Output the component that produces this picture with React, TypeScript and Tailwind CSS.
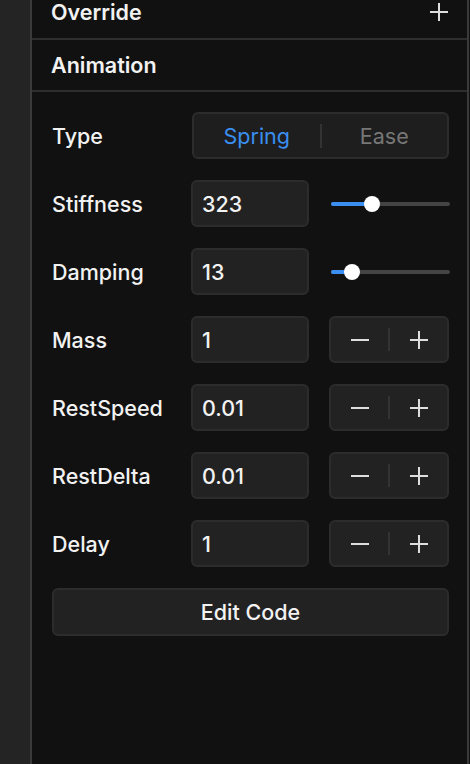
import React from 'react';

type Row =
  | { label: string; value: string; kind: 'slider'; fill: number }
  | { label: string; value: string; kind: 'stepper' };

const rows: Row[] = [
  { label: 'Stiffness', value: '323', kind: 'slider', fill: 0.345 },
  { label: 'Damping', value: '13', kind: 'slider', fill: 0.176 },
  { label: 'Mass', value: '1', kind: 'stepper' },
  { label: 'RestSpeed', value: '0.01', kind: 'stepper' },
  { label: 'RestDelta', value: '0.01', kind: 'stepper' },
  { label: 'Delay', value: '1', kind: 'stepper' },
];

function PlusIcon({ size = 18 }: { size?: number }) {
  return (
    <svg width={size} height={size} viewBox="0 0 18 18" fill="none">
      <path d="M9 0v18M0 9h18" stroke="#dedede" strokeWidth="2" />
    </svg>
  );
}

function MinusIcon() {
  return (
    <svg width="18" height="18" viewBox="0 0 18 18" fill="none">
      <path d="M0 9h18" stroke="#dedede" strokeWidth="2" />
    </svg>
  );
}

function Slider({ fill }: { fill: number }) {
  return (
    <div className="relative ml-[2px] h-[16px] w-[119px]">
      <div className="absolute left-0 right-0 top-[6px] h-[4px] rounded-full bg-[#444]" />
      <div
        className="absolute left-0 top-[6px] h-[4px] rounded-full bg-[#3a8ff0]"
        style={{ width: `${fill * 100}%` }}
      />
      <div
        className="absolute top-0 -ml-[8px] h-[16px] w-[16px] rounded-full bg-white"
        style={{ left: `${fill * 100}%` }}
      />
    </div>
  );
}

function Stepper() {
  return (
    <div className="flex h-[47px] w-[120px] items-center rounded-[6px] border-2 border-[#2c2c2c] bg-[#222]">
      <div className="flex flex-1 justify-center">
        <MinusIcon />
      </div>
      <div className="h-[23px] w-[2px] bg-[#333]" />
      <div className="flex flex-1 justify-center">
        <PlusIcon />
      </div>
    </div>
  );
}

export default function App() {
  return (
    <div
      className="flex h-[764px] w-[470px] overflow-hidden bg-[#111] text-[#f2f2f2]"
      style={{ fontFamily: 'Inter, "Noto Sans", sans-serif' }}
    >
      <div className="w-[32px] shrink-0 border-r-2 border-[#3a3a3a] bg-[#242424]" />

      <div className="flex w-[437px] shrink-0 flex-col border-r-2 border-[#3a3a3a]">
        {/* Override header, scrolled partly out of view */}
        <div className="flex h-[40px] shrink-0 items-start justify-between border-b-2 border-[#2e2e2e] pl-[19px] pr-[19px]">
          <span className="text-[21.5px] font-semibold leading-[24px]">Override</span>
          <span className="mt-[3px]">
            <PlusIcon />
          </span>
        </div>

        <div className="flex h-[52px] shrink-0 items-center border-b-2 border-[#2e2e2e] pl-[19px]">
          <span className="text-[21.5px] font-semibold">Animation</span>
        </div>

        <div className="flex flex-col gap-[21px] pl-[20px] pr-[18px] pt-[20px] text-[21.5px]">
          <div className="flex h-[47px] items-center">
            <span className="w-[140px] pt-[1px] font-medium">Type</span>
            <div className="flex h-[47px] flex-1 items-center rounded-[6px] border-2 border-[#2c2c2c] bg-[#1e1e1e] pt-[1px]">
              <span className="flex-1 text-center text-[#3a8ff0]">Spring</span>
              <div className="h-[24px] w-[2px] bg-[#333]" />
              <span className="flex-1 text-center text-[#777]">Ease</span>
            </div>
          </div>

          {rows.map((row) => (
            <div key={row.label} className="flex h-[47px] items-center">
              <span className="w-[139px] shrink-0 pt-[1px] font-medium">{row.label}</span>
              <div className="flex h-[47px] w-[118px] shrink-0 items-center rounded-[6px] border-2 border-[#2c2c2c] bg-[#222] pl-[9px] pt-[1px] font-medium">
                {row.value}
              </div>
              <div className="ml-[20px] flex items-center">
                {row.kind === 'slider' ? <Slider fill={row.fill} /> : <Stepper />}
              </div>
            </div>
          ))}

          <div className="flex h-[48px] items-center justify-center rounded-[6px] border-2 border-[#2c2c2c] bg-[#222] pt-[1px] font-medium">
            Edit Code
          </div>
        </div>
      </div>
    </div>
  );
}
